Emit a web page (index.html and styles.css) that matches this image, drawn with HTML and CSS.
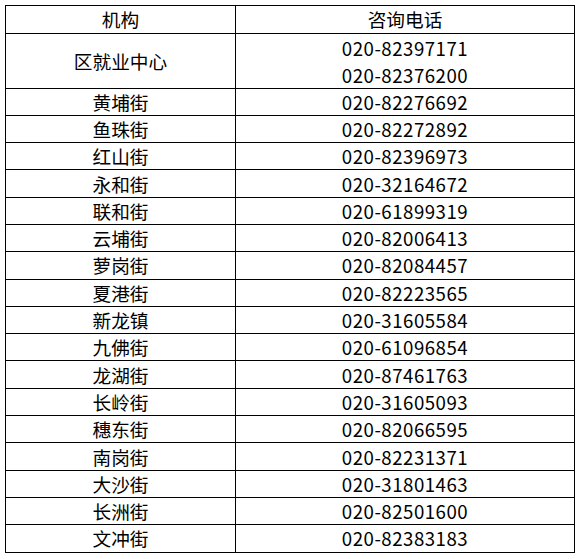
FILE: index.html
```html
<!DOCTYPE html>
<html lang="zh-CN">
<head>
<meta charset="utf-8">
<title>咨询电话</title>
<link rel="stylesheet" href="styles.css">
</head>
<body>
<table class="phone-table">
  <colgroup><col class="col-org"><col class="col-tel"></colgroup>
  <tr class="head"><td>机构</td><td>咨询电话</td></tr>
  <tr class="double"><td>区就业中心</td><td class="tel"><div class="line">020-82397171</div><div class="line">020-82376200</div></td></tr>
  <tr><td>黄埔街</td><td class="tel">020-82276692</td></tr>
  <tr><td>鱼珠街</td><td class="tel">020-82272892</td></tr>
  <tr><td>红山街</td><td class="tel">020-82396973</td></tr>
  <tr><td>永和街</td><td class="tel">020-32164672</td></tr>
  <tr><td>联和街</td><td class="tel">020-61899319</td></tr>
  <tr><td>云埔街</td><td class="tel">020-82006413</td></tr>
  <tr><td>萝岗街</td><td class="tel">020-82084457</td></tr>
  <tr><td>夏港街</td><td class="tel">020-82223565</td></tr>
  <tr><td>新龙镇</td><td class="tel">020-31605584</td></tr>
  <tr><td>九佛街</td><td class="tel">020-61096854</td></tr>
  <tr><td>龙湖街</td><td class="tel">020-87461763</td></tr>
  <tr><td>长岭街</td><td class="tel">020-31605093</td></tr>
  <tr><td>穗东街</td><td class="tel">020-82066595</td></tr>
  <tr><td>南岗街</td><td class="tel">020-82231371</td></tr>
  <tr><td>大沙街</td><td class="tel">020-31801463</td></tr>
  <tr><td>长洲街</td><td class="tel">020-82501600</td></tr>
  <tr><td>文冲街</td><td class="tel">020-82383183</td></tr>
</table>
</body>
</html>
```
FILE: styles.css
```css
html, body {
  margin: 0;
  background: #fff;
}
body {
  padding: 5px 0 0 5px;
  font-family: "Noto Sans CJK SC", "Noto Sans", sans-serif;
  font-size: 18.67px;
  color: #000;
}
.phone-table {
  border-collapse: collapse;
  width: 569px;
  table-layout: fixed;
}
.col-org { width: 230px; }
.col-tel { width: 339px; }
.phone-table tr {
  height: 27.3px;
}
.phone-table tr.head {
  height: 27.5px;
}
.phone-table tr.double {
  height: 54px;
}
.phone-table td {
  border: 1px solid #000;
  padding: 0;
  text-align: center;
  vertical-align: middle;
  line-height: 20px;
}
.phone-table td.tel {
  letter-spacing: 0.5px;
}
.line {
  line-height: 27px;
}
```
